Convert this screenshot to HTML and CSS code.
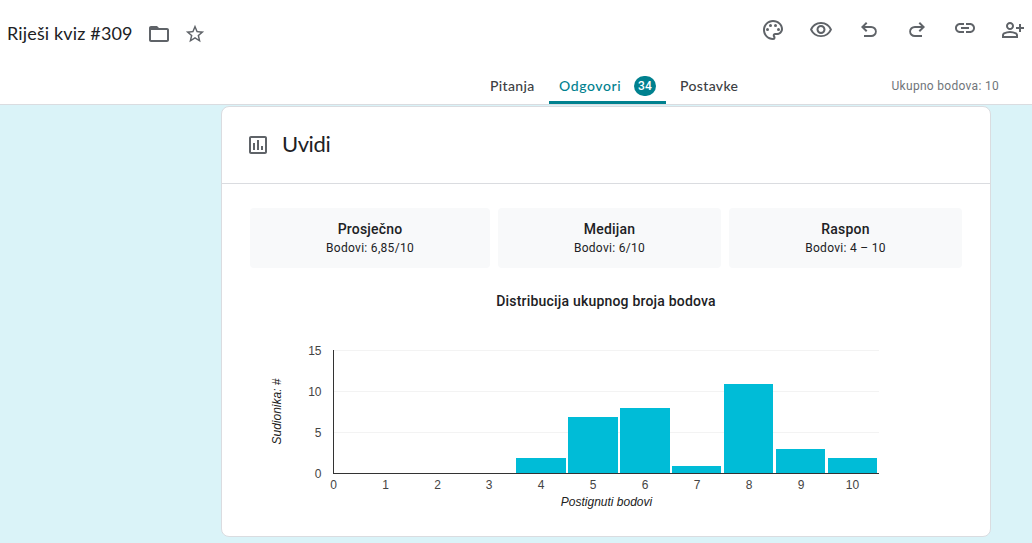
FILE: index.html
```
<!doctype html>
<html lang="hr">
<head>
<meta charset="utf-8">
<title>Riješi kviz #309</title>
<link rel="stylesheet" href="styles.css">
</head>
<body>
<header class="header">
    <div class="topbar">
        <h1 class="form-title">Riješi kviz #309</h1>
        <svg class="icon folder" viewBox="0 0 24 24"><path d="M20 6h-8l-2-2H4c-1.1 0-1.99.9-1.99 2L2 18c0 1.1.9 2 2 2h16c1.1 0 2-.9 2-2V8c0-1.1-.9-2-2-2zm0 12H4V8h16v10z"/></svg>
        <svg class="icon star" viewBox="0 0 24 24"><path d="M22 9.24l-7.19-.62L12 2 9.19 8.63 2 9.24l5.46 4.73L5.82 21 12 17.27 18.18 21l-1.63-7.03L22 9.24zM12 15.4l-3.76 2.27 1-4.28-3.32-2.88 4.38-.38L12 6.1l1.71 4.04 4.38.38-3.32 2.88 1 4.28L12 15.4z"/></svg>
        <div class="actions">
            <svg class="icon" viewBox="0 0 24 24"><path d="M12 22C6.49 22 2 17.51 2 12S6.49 2 12 2s10 4.04 10 9c0 3.31-2.69 6-6 6h-1.77c-.28 0-.5.22-.5.5 0 .12.05.23.13.33.41.47.64 1.06.64 1.67A2.5 2.5 0 0 1 12 22zm0-18c-4.41 0-8 3.59-8 8s3.59 8 8 8c.28 0 .5-.22.5-.5a.54.54 0 0 0-.14-.35c-.41-.46-.63-1.05-.63-1.65a2.5 2.5 0 0 1 2.5-2.5H16c2.21 0 4-1.79 4-4 0-3.86-3.59-7-8-7z"/><circle cx="6.5" cy="11.5" r="1.5"/><circle cx="9.5" cy="7.5" r="1.5"/><circle cx="14.5" cy="7.5" r="1.5"/><circle cx="17.5" cy="11.5" r="1.5"/></svg>
            <svg class="icon" viewBox="0 0 24 24"><path d="M12 6a9.77 9.77 0 0 1 8.82 5.5 9.647 9.647 0 0 1-17.64 0A9.77 9.77 0 0 1 12 6m0-2C7 4 2.73 7.11 1 11.5 2.73 15.89 7 19 12 19s9.27-3.11 11-7.5C21.27 7.11 17 4 12 4zm0 5a2.5 2.5 0 0 1 0 5 2.5 2.5 0 0 1 0-5m0-2c-2.48 0-4.5 2.02-4.5 4.5S9.52 16 12 16s4.5-2.02 4.5-4.5S14.48 7 12 7z"/></svg>
            <svg class="icon" viewBox="0 -960 960 960"><path d="M280-200v-80h284q63 0 109.500-40T720-420q0-60-46.500-100T564-560H312l104 104-56 56-200-200 200-200 56 56-104 104h252q97 0 163 63t66 157q0 94-66 157t-163 63H280Z"/></svg>
            <svg class="icon" viewBox="0 -960 960 960"><path d="M396-200q-97 0-163-63t-66-157q0-94 66-157t163-63h252L544-744l56-56 200 200-200 200-56-56 104-104H396q-63 0-109.500 40T240-420q0 60 46.500 100T396-280h284v80H396Z"/></svg>
            <svg class="icon link" viewBox="0 0 24 24"><path d="M3.9 12c0-1.71 1.39-3.1 3.1-3.1h4V7H7c-2.76 0-5 2.24-5 5s2.24 5 5 5h4v-1.9H7c-1.71 0-3.1-1.39-3.1-3.1zM8 13h8v-2H8v2zm9-6h-4v1.9h4c1.71 0 3.1 1.39 3.1 3.1s-1.39 3.1-3.1 3.1h-4V17h4c2.76 0 5-2.24 5-5s-2.24-5-5-5z"/></svg>
            <svg class="icon" viewBox="0 -960 960 960"><path d="M720-400v-120H600v-80h120v-120h80v120h120v80H800v120h-80Zm-360-80q-66 0-113-47t-47-113q0-66 47-113t113-47q66 0 113 47t47 113q0 66-47 113t-113 47ZM40-160v-112q0-34 17.500-62.500T104-378q62-31 126-46.500T360-440q66 0 130 15.500T616-378q29 15 46.500 43.500T680-272v112H40Zm80-80h480v-32q0-11-5.500-20T580-306q-54-27-109-40.500T360-360q-56 0-111 13.500T140-306q-9 5-14.500 14t-5.500 20v32Zm240-320q33 0 56.500-23.500T440-640q0-33-23.500-56.500T360-720q-33 0-56.500 23.500T280-640q0 33 23.500 56.500T360-560Z"/></svg>
        </div>
    </div>
    <nav class="tabs">
        <div class="tab">Pitanja</div>
        <div class="tab active">Odgovori<span class="count">34</span></div>
        <div class="tab">Postavke</div>
        <div class="total">Ukupno bodova: 10</div>
    </nav>
</header>
<main class="card">
    <div class="card-head">
        <svg class="icon" viewBox="0 0 24 24"><path d="M19 3H5c-1.1 0-2 .9-2 2v14c0 1.1.9 2 2 2h14c1.1 0 2-.9 2-2V5c0-1.1-.9-2-2-2zm0 16H5V5h14v14zM7 10h2v7H7zM11 7h2v10h-2zM15 13h2v4h-2z"/></svg>
        <h2 class="card-title">Uvidi</h2>
    </div>
    <div class="stats">
        <div class="stat"><b>Prosječno</b><span>Bodovi: 6,85/10</span></div>
        <div class="stat"><b>Medijan</b><span>Bodovi: 6/10</span></div>
        <div class="stat"><b>Raspon</b><span>Bodovi: 4 – 10</span></div>
    </div>
    <h3 class="chart-title">Distribucija ukupnog broja bodova</h3>
    <svg class="chart" width="712" height="200" viewBox="0 0 712 200">
        <g class="grid">
            <rect x="84" y="30" width="545" height="1"/>
            <rect x="84" y="71" width="545" height="1"/>
            <rect x="84" y="112" width="545" height="1"/>
        </g>
        <g class="bars">
            <rect x="266" y="138" width="50" height="15"/>
            <rect x="318" y="97" width="50" height="56"/>
            <rect x="370" y="88" width="50" height="65"/>
            <rect x="422" y="146" width="49" height="7"/>
            <rect x="474" y="64" width="49" height="89"/>
            <rect x="526" y="129" width="49" height="24"/>
            <rect x="578" y="138" width="49" height="15"/>
        </g>
        <g class="axis">
            <rect x="83" y="30" width="1" height="124"/>
            <rect x="83" y="153" width="546" height="1"/>
        </g>
        <g class="ticks-y">
            <text x="71.5" y="35">15</text>
            <text x="71.5" y="76">10</text>
            <text x="71.5" y="117">5</text>
            <text x="71.5" y="158">0</text>
        </g>
        <g class="ticks-x">
            <text x="83.5" y="169">0</text>
            <text x="135.5" y="169">1</text>
            <text x="187.5" y="169">2</text>
            <text x="239" y="169">3</text>
            <text x="291" y="169">4</text>
            <text x="343" y="169">5</text>
            <text x="395" y="169">6</text>
            <text x="447" y="169">7</text>
            <text x="499" y="169">8</text>
            <text x="551" y="169">9</text>
            <text x="602.5" y="169">10</text>
        </g>
        <text class="axis-title" x="356.5" y="186">Postignuti bodovi</text>
        <text class="axis-title" transform="translate(31 91.5) rotate(-90)">Sudionika: #</text>
    </svg>
</main>
</body>
</html>
```
FILE: styles.css
```
body{
    margin: 0;
    height: 543px;
    overflow: hidden;
    background-color: #daf3f8;
    color: #202124;
    font-family: Roboto, "Liberation Sans", sans-serif;
}
h1, h2, h3{
    margin: 0;
    font-weight: 400;
}
.icon{
    display: block;
    flex: none;
    width: 24px;
    height: 24px;
    fill: #5f6368;
}

/* header */
.header{
    height: 104px;
    background-color: #fff;
    border-bottom: 1px solid #dadce0;
}
.topbar{
    display: flex;
    align-items: center;
    height: 68px;
    padding-left: 7px;
}
.form-title{
    width: 140px;
    padding-bottom: 2px;
    font-family: Lato, sans-serif;
    font-size: 18px;
    letter-spacing: 0.15px;
    white-space: nowrap;
}
.star{
    width: 22px;
    height: 22px;
    margin-left: 13px;
}
.actions{
    display: flex;
    align-items: center;
    gap: 24px;
    margin-left: auto;
    padding: 0 7px 8px 0;
}
.link{
    margin-bottom: 4px;
}
.tabs{
    display: flex;
    height: 36px;
    padding-left: 480px;
    line-height: 36px;
    font-family: Lato, sans-serif;
    font-size: 14px;
    font-weight: 500;
    letter-spacing: 0.35px;
}
.tab{
    box-sizing: border-box;
    width: 69px;
    padding-left: 10px;
    color: #3c4043;
    white-space: nowrap;
}
.tab.active{
    display: flex;
    align-items: center;
    justify-content: space-between;
    width: 117px;
    padding-right: 10px;
    border-bottom: 3px solid #00818f;
    border-radius: 3px 3px 0 0;
    padding-top: 3px;
    color: #00818f;
    letter-spacing: 0.6px;
}
.tab:nth-child(3){
    width: 90px;
    padding-left: 14px;
}
.count{
    width: 22px;
    height: 20px;
    border-radius: 10px;
    background-color: #00818f;
    color: #fff;
    font-family: Roboto, sans-serif;
    font-size: 12px;
    line-height: 20px;
    letter-spacing: 0.2px;
    text-align: center;
}
.total{
    margin-left: auto;
    padding-right: 33px;
    color: #70757a;
    font-family: Roboto, sans-serif;
    font-size: 12px;
    font-weight: 400;
    letter-spacing: 0.3px;
}

/* insights card */
.card{
    box-sizing: border-box;
    width: 770px;
    height: 431px;
    margin: 1px 0 0 221px;
    border: 1px solid #dadce0;
    border-radius: 8px;
    background-color: #fff;
}
.card-head{
    display: flex;
    align-items: center;
    gap: 12px;
    height: 76px;
    padding-left: 24px;
    border-bottom: 1px solid #dadce0;
}
.card-title{
    padding-bottom: 3px;
    font-family: Lato, sans-serif;
    font-size: 22px;
    letter-spacing: -0.4px;
}
.stats{
    display: grid;
    grid-template-columns: 240px 223px 233px;
    gap: 8px;
    padding: 24px 28px 0;
}
.stat{
    display: flex;
    flex-direction: column;
    align-items: center;
    box-sizing: border-box;
    height: 60px;
    padding-top: 11px;
    border-radius: 4px;
    background-color: #f8f9fa;
}
.stat b{
    font-size: 14px;
    font-weight: 500;
    line-height: 20px;
    letter-spacing: 0.2px;
}
.stat span{
    font-size: 12px;
    line-height: 18px;
    letter-spacing: 0.3px;
}
.chart-title{
    padding-top: 23px;
    font-size: 14px;
    font-weight: 500;
    line-height: 20px;
    letter-spacing: 0.2px;
    text-align: center;
}

/* histogram */
.chart{
    display: block;
    margin: 9px 0 0 28px;
    font-family: "Liberation Sans", sans-serif;
    font-size: 12px;
}
.grid{
    fill: #f3f3f3;
}
.bars{
    fill: #00bcd7;
}
.axis{
    fill: #333;
}
.ticks-y{
    fill: #444;
    text-anchor: end;
}
.ticks-x{
    fill: #444;
    text-anchor: middle;
}
.axis-title{
    fill: #222;
    font-style: italic;
    text-anchor: middle;
}
```
